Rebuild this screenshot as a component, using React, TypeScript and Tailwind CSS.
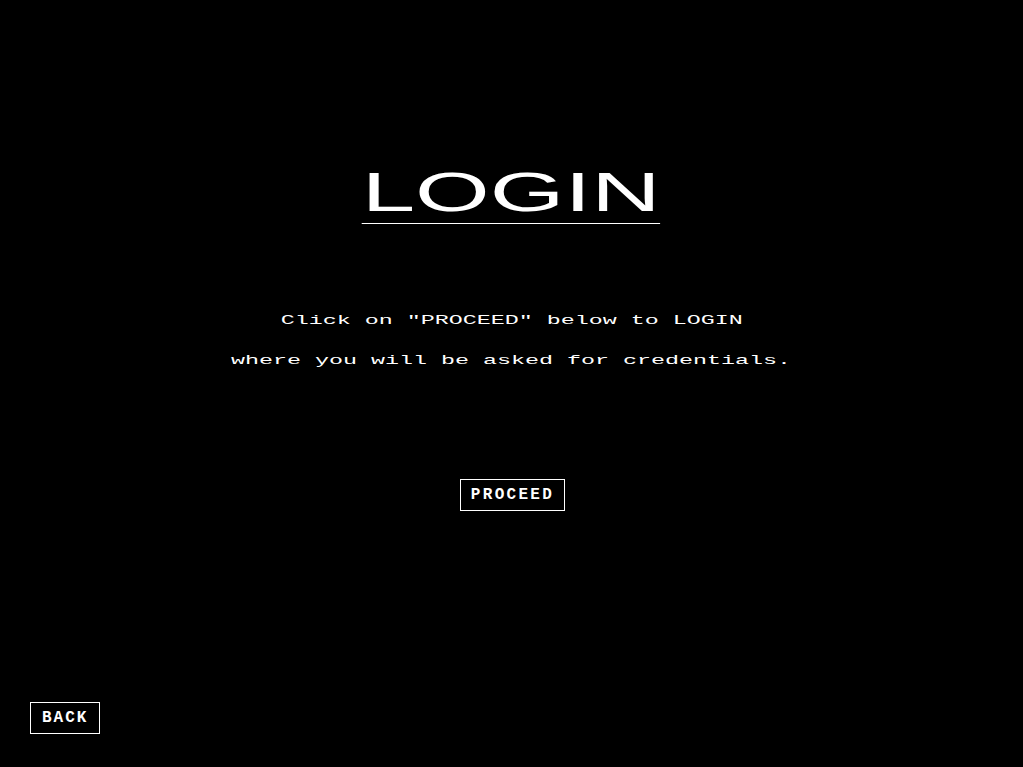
export default function App() {
  return (
    <div className="flex h-screen w-full flex-col bg-black text-white">
      <div className="flex flex-1 flex-col items-center pt-[161px]">
        <h1 className="inline-block scale-x-[1.715] border-b border-white font-['Liberation_Sans',Arial,sans-serif] text-[56px] font-normal leading-[62px]">
          LOGIN
        </h1>
        <div className="mt-[77px] flex flex-col items-center font-['Liberation_Mono','Courier_New',monospace] text-[13px] leading-[40px]">
          <p className="scale-x-[1.795] whitespace-pre">
            Click on "PROCEED" below to LOGIN
          </p>
          <p className="scale-x-[1.795] whitespace-pre">
            where you will be asked for credentials.
          </p>
        </div>
        <button className="mt-[98px] ml-[2px] border border-white px-[10px] py-[6px] font-['Liberation_Mono','Courier_New',monospace] text-[16px] font-bold leading-[18px] tracking-[2.3px]">
          PROCEED
        </button>
      </div>
      <div className="px-[30px] pb-[33px]">
        <button className="border border-white px-[11px] py-[6px] font-['Liberation_Mono','Courier_New',monospace] text-[16px] font-bold leading-[18px] tracking-[2px]">
          BACK
        </button>
      </div>
    </div>
  );
}
